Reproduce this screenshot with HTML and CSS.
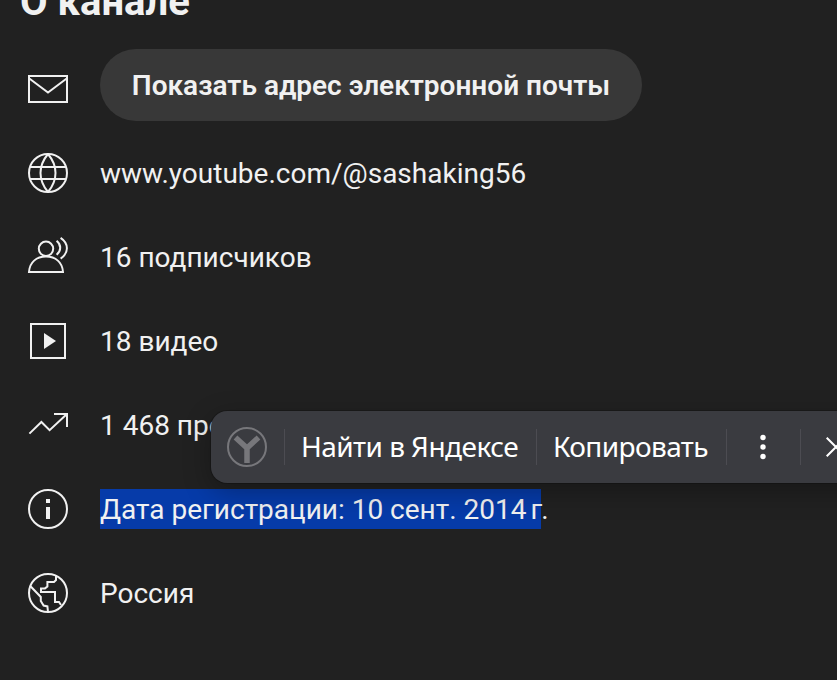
FILE: index.html
```
<!DOCTYPE html>
<html lang="ru">
<head>
    <meta charset="UTF-8">
    <meta name="viewport" content="width=device-width, initial-scale=1.0">
    <title>О канале</title>
    <link rel="stylesheet" href="styles.css">
</head>
<body>
    <div class="about">
        <h2 class="about-title">О канале</h2>

        <div class="row row-email">
            <svg class="icon" viewBox="0 0 24 24"><path d="M2.5 5.5h19v13h-19zM2.5 6.6l9.5 7.2 9.5-7.2"/></svg>
            <button class="email-btn">Показать адрес электронной почты</button>
        </div>

        <div class="rows">
            <div class="row">
                <svg class="icon" viewBox="0 0 24 24"><circle cx="12" cy="12" r="9.5"/><path d="M3 9h18M3 15h18M12 2.5C7 8.5 7 15.5 12 21.5M12 2.5C17 8.5 17 15.5 12 21.5"/></svg>
                <span class="text">www.youtube.com/@sashaking56</span>
            </div>
            <div class="row">
                <svg class="icon" viewBox="0 0 24 24"><circle cx="11" cy="7.9" r="3.6"/><path d="M2.5 19.5C2.8 14.6 6.2 11.8 11 11.8s8.2 2.8 8.500 7.700zM16.300 3.900c2.400 2 2.400 5 0 7M18.300 2.400c4.200 2.800 4.200 7.600 0 10.400"/></svg>
                <span class="text">16 подписчиков</span>
            </div>
            <div class="row">
                <svg class="icon" viewBox="0 0 24 24"><path d="M3.5 3.5h17v17h-17z"/><path class="solid" d="M10 8v8l6-4z"/></svg>
                <span class="text">18 видео</span>
            </div>
            <div class="row">
                <svg class="icon" viewBox="0 0 24 24"><path d="M2.7 16.3l6-5.8 4.1 4.1 8.4-7.9M15 6.5h6.5v6.5"/></svg>
                <span class="text">1 468 просмотров</span>
            </div>
            <div class="row">
                <svg class="icon" viewBox="0 0 24 24"><circle cx="12" cy="12" r="9.5"/><path class="solid" d="M11 7h2v2h-2zM11 11h2v6h-2z"/></svg>
                <span class="text text-date"><span class="selected">Дата регистрации: 10 сент. 2014<span class="nbsp"></span>г</span>.</span>
            </div>
            <div class="row">
                <svg class="icon" viewBox="0 0 24 24"><circle cx="12" cy="12" r="9.5"/><path d="M16 3.300v2.200l-1 1h-3.300v2.300l-1.200.9h-2v1.800h7v5h2l1 1.500M3 8.400l5.400 5.600v2l1.400 2.300 1.900.4.300 2.800"/></svg>
                <span class="text">Россия</span>
            </div>
        </div>
    </div>

    <div class="popup">
        <svg class="ya-logo" viewBox="0 0 40 40"><circle cx="20" cy="20" r="19"/><path d="M8.5 10.500L20 21l11.500-10.500M20 19.500V36"/></svg>
        <span class="popup-item find">Найти в Яндексе</span>
        <span class="popup-item copy">Копировать</span>
        <span class="popup-item more"><svg viewBox="0 0 6 24"><circle cx="3" cy="2.5" r="2.7"/><circle cx="3" cy="12" r="2.7"/><circle cx="3" cy="21.5" r="2.7"/></svg></span>
        <span class="popup-item close"><svg viewBox="0 0 20 20"><path d="M.7.7l18.600 18.600M19.300.7L.7 19.300"/></svg></span>
    </div>
</body>
</html>
```
FILE: styles.css
```
* { margin: 0; padding: 0; box-sizing: border-box; }
body { width: 837px; height: 680px; overflow: hidden; position: relative; background: #212121; color: #f1f1f1; font-family: Roboto, "Liberation Sans", sans-serif; }
.about { padding-left: 24px; }
.about-title { margin: -24px 0 21px -4px; height: 52px; line-height: 52px; font-size: 40px; font-weight: 700; white-space: nowrap; }
.row { display: flex; align-items: center; gap: 28px; height: 48px; }
.row-email { height: 72px; margin-bottom: 28px; }
.row-email .icon { margin-top: 8px; }
.rows { display: flex; flex-direction: column; gap: 36px; }
.icon { flex: none; width: 48px; height: 48px; fill: none; stroke: #f1f1f1; stroke-width: 1; }
.icon .solid { fill: #f1f1f1; stroke: none; }
.email-btn { width: 542px; height: 72px; padding-top: 2px; border: 0; border-radius: 36px; background: #383838; color: #f1f1f1; font: 600 28px/70px Roboto, "Liberation Sans", sans-serif; white-space: nowrap; }
.text { padding-top: 2px; font-size: 28px; line-height: 40px; white-space: nowrap; }
.text-date { height: 40px; padding-top: 0; line-height: 42px; }
.selected { display: inline-block; height: 40px; margin-right: -1px; background: linear-gradient(#063ba9, #063ba9) 0 0 / calc(100% - 1px) 100% no-repeat; }
.nbsp { display: inline-block; width: 4px; }

.popup { position: absolute; left: 211px; top: 411px; width: 660px; height: 72px; padding-left: 16px; display: flex; align-items: center; border-radius: 16px; background: #3a3b40; color: #fff; box-shadow: 0 0 0 1px rgba(0,0,0,0.2), 0 8px 28px rgba(0,0,0,0.3); font-family: "Noto Sans", sans-serif; font-size: 28px; }
.ya-logo { flex: none; width: 40px; height: 40px; margin-right: 17px; fill: none; stroke: #77777b; stroke-width: 2; }
.ya-logo path { stroke-width: 5.5; }
.popup-item { flex: none; display: flex; align-items: center; height: 36px; padding-left: 16px; border-left: 1px solid #4c4c52; white-space: nowrap; }
.find { width: 252px; line-height: 34px; padding-bottom: 2px; letter-spacing: -0.55px; }
.copy { width: 190px; line-height: 34px; padding-bottom: 2px; letter-spacing: -0.6px; }
.more { width: 74px; padding-left: 33px; }
.more svg { width: 6px; height: 24px; fill: #fff; overflow: visible; }
.close { padding-left: 25px; }
.close svg { width: 20px; height: 20px; fill: none; stroke: #fff; stroke-width: 2; }
```
